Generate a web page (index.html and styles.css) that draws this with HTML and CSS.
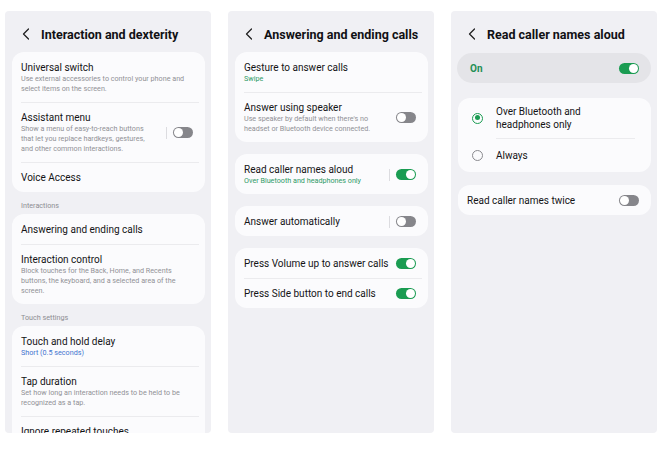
FILE: index.html
```html
<!DOCTYPE html>
<html lang="en">
<head>
<meta charset="utf-8">
<title>Accessibility settings</title>
<link rel="stylesheet" href="styles.css">
</head>
<body>
<div class="screens">

  <section class="panel">
    <header class="hdr">
      <svg class="back" viewBox="0 0 8 12" width="8" height="12"><path d="M6.5 1 L1.5 6 L6.5 11" fill="none" stroke="#222" stroke-width="1.3" stroke-linecap="round" stroke-linejoin="round"/></svg>
      <h1>Interaction and dexterity</h1>
    </header>
    <div class="card">
      <div class="item">
        <div class="txt">
          <div class="t">Universal switch</div>
          <div class="d">Use external accessories to control your phone and select items on the screen.</div>
        </div>
      </div>
      <div class="item">
        <div class="txt">
          <div class="t">Assistant menu</div>
          <div class="d">Show a menu of easy-to-reach buttons that let you replace hardkeys, gestures, and other common interactions.</div>
        </div>
        <span class="sep"></span><span class="tg off"></span>
      </div>
      <div class="item">
        <div class="txt"><div class="t">Voice Access</div></div>
      </div>
    </div>
    <div class="sec">Interactions</div>
    <div class="card">
      <div class="item">
        <div class="txt"><div class="t">Answering and ending calls</div></div>
      </div>
      <div class="item">
        <div class="txt">
          <div class="t">Interaction control</div>
          <div class="d">Block touches for the Back, Home, and Recents buttons, the keyboard, and a selected area of the screen.</div>
        </div>
      </div>
    </div>
    <div class="sec">Touch settings</div>
    <div class="card">
      <div class="item">
        <div class="txt">
          <div class="t">Touch and hold delay</div>
          <div class="d blue">Short (0.5 seconds)</div>
        </div>
      </div>
      <div class="item">
        <div class="txt">
          <div class="t">Tap duration</div>
          <div class="d">Set how long an interaction needs to be held to be recognized as a tap.</div>
        </div>
      </div>
      <div class="item">
        <div class="txt"><div class="t">Ignore repeated touches</div></div>
      </div>
    </div>
  </section>

  <section class="panel">
    <header class="hdr">
      <svg class="back" viewBox="0 0 8 12" width="8" height="12"><path d="M6.5 1 L1.5 6 L6.5 11" fill="none" stroke="#222" stroke-width="1.3" stroke-linecap="round" stroke-linejoin="round"/></svg>
      <h1>Answering and ending calls</h1>
    </header>
    <div class="card">
      <div class="item">
        <div class="txt">
          <div class="t">Gesture to answer calls</div>
          <div class="d green">Swipe</div>
        </div>
      </div>
      <div class="item">
        <div class="txt">
          <div class="t">Answer using speaker</div>
          <div class="d">Use speaker by default when there's no headset or Bluetooth device connected.</div>
        </div>
        <span class="tg off"></span>
      </div>
    </div>
    <div class="card gap">
      <div class="item">
        <div class="txt">
          <div class="t">Read caller names aloud</div>
          <div class="d green">Over Bluetooth and headphones only</div>
        </div>
        <span class="sep"></span><span class="tg on"></span>
      </div>
    </div>
    <div class="card gap">
      <div class="item">
        <div class="txt"><div class="t">Answer automatically</div></div>
        <span class="sep"></span><span class="tg off"></span>
      </div>
    </div>
    <div class="card gap">
      <div class="item">
        <div class="txt"><div class="t">Press Volume up to answer calls</div></div>
        <span class="tg on"></span>
      </div>
      <div class="item">
        <div class="txt"><div class="t">Press Side button to end calls</div></div>
        <span class="tg on"></span>
      </div>
    </div>
  </section>

  <section class="panel">
    <header class="hdr">
      <svg class="back" viewBox="0 0 8 12" width="8" height="12"><path d="M6.5 1 L1.5 6 L6.5 11" fill="none" stroke="#222" stroke-width="1.3" stroke-linecap="round" stroke-linejoin="round"/></svg>
      <h1>Read caller names aloud</h1>
    </header>
    <div class="onbar">
      <span class="onlabel">On</span>
      <span class="tg on"></span>
    </div>
    <div class="card radios">
      <div class="ritem">
        <span class="radio sel"></span>
        <div class="rt">Over Bluetooth and<br>headphones only</div>
      </div>
      <div class="ritem">
        <span class="radio"></span>
        <div class="rt">Always</div>
      </div>
    </div>
    <div class="card gap2">
      <div class="item">
        <div class="txt"><div class="t">Read caller names twice</div></div>
        <span class="tg off"></span>
      </div>
    </div>
  </section>

</div>
</body>
</html>
```

FILE: styles.css
```css
* { box-sizing: border-box; }

html, body {
  margin: 0;
  background: #ffffff;
}

body {
  padding: 11px 0 0 5px;
  font-family: Roboto, "Noto Sans", "Liberation Sans", sans-serif;
  color: #111114;
}

.screens {
  display: flex;
  gap: 17px;
}

.panel {
  width: 206px;
  height: 422px;
  background: #f0f0f4;
  border-radius: 4px;
  overflow: hidden;
  padding: 0 6px 0 7px;
  display: flex;
  flex-direction: column;
}

.hdr {
  height: 41px;
  display: flex;
  align-items: center;
  padding: 5px 0 0 10px;
  gap: 11px;
  flex-shrink: 0;
}

.back { flex-shrink: 0; }

.hdr h1 {
  margin: 0;
  font-size: 12.5px;
  font-weight: 700;
  letter-spacing: 0;
  white-space: nowrap;
}

.card {
  background: #fbfbfd;
  border-radius: 12px;
  flex-shrink: 0;
}

.card.gap { margin-top: 12px; }
.card.gap2 { margin-top: 13px; }

.item {
  display: flex;
  align-items: center;
  padding: 9px 12px 8px 9px;
  position: relative;
}

.item + .item::before {
  content: "";
  position: absolute;
  top: 0;
  left: 9px;
  right: 6px;
  border-top: 1px solid #ebebee;
}

.txt { flex: 1; min-width: 0; }

.t {
  font-size: 10px;
  line-height: 13px;
  color: #141416;
  white-space: nowrap;
}

.d {
  font-size: 7.2px;
  line-height: 10px;
  color: #919196;
  padding-right: 4px;
}

.d.blue { color: #3f73cf; }
.d.green { color: #2f9a66; }

.sec {
  font-size: 7.2px;
  line-height: 10px;
  color: #8d8d92;
  padding: 9px 0 3px 9px;
  flex-shrink: 0;
}

.sep {
  width: 1px;
  height: 12px;
  background: #dcdce0;
  margin: 0 6px 0 6px;
  flex-shrink: 0;
}

.tg {
  width: 20px;
  height: 11px;
  border-radius: 6px;
  position: relative;
  flex-shrink: 0;
}

.tg::after {
  content: "";
  position: absolute;
  top: 1px;
  width: 9px;
  height: 9px;
  border-radius: 50%;
  background: #ffffff;
}

.tg.off { background: #86868b; }
.tg.off::after { left: 1px; }
.tg.on { background: #1a9c52; }
.tg.on::after { right: 1px; }

.onbar {
  height: 30px;
  margin: 1px 0 0 -1px;
  background: #e4e4e8;
  border-radius: 15px;
  display: flex;
  align-items: center;
  justify-content: space-between;
  padding: 0 12px 0 13px;
  flex-shrink: 0;
}

.onlabel {
  font-size: 10px;
  font-weight: 700;
  color: #1f8f55;
}

.radios { margin-top: 15px; }

.ritem {
  display: flex;
  align-items: center;
  padding: 7px 12px 7px 14px;
  gap: 13px;
  position: relative;
}

.ritem + .ritem {
  padding: 11px 12px 10px 14px;
}

.ritem + .ritem::before {
  content: "";
  position: absolute;
  top: 0;
  left: 38px;
  right: 16px;
  border-top: 1px solid #ebebee;
}

.radio {
  width: 11px;
  height: 11px;
  border-radius: 50%;
  border: 1.3px solid #8a8a8f;
  flex-shrink: 0;
  position: relative;
}

.radio.sel {
  border-color: #1a9c52;
}

.radio.sel::after {
  content: "";
  position: absolute;
  left: 1.5px;
  top: 1.5px;
  width: 5.4px;
  height: 5.4px;
  border-radius: 50%;
  background: #1a9c52;
}

.rt {
  font-size: 10px;
  line-height: 13px;
  color: #141416;
}
```
